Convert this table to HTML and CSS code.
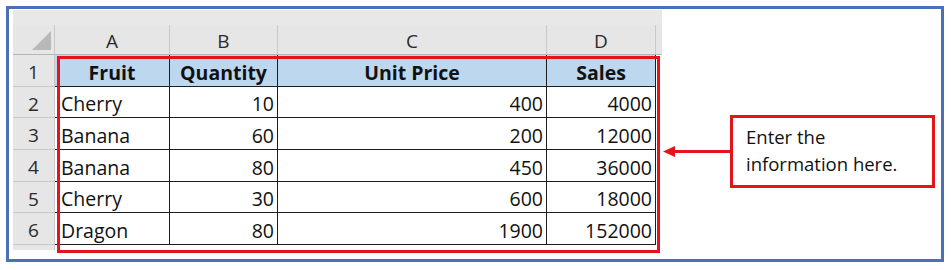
FILE: index.html
```html
<!DOCTYPE html>
<html>
<head>
<meta charset="utf-8">
<link rel="stylesheet" href="styles.css">
</head>
<body>
<div class="frame">
  <div class="sheet">
    <div class="grid">
      <div class="strip"></div>
      <div class="corner"><svg class="tri" width="42" height="30" viewBox="0 0 42 30"><polygon points="19,25 38,25 38,6" fill="#b8b8b8"/></svg></div>
      <div class="colh">A</div>
      <div class="colh">B</div>
      <div class="colh">C</div>
      <div class="colh">D</div>
      <div class="colh end"></div>

      <div class="rowh">1</div>
      <div class="cell th">Fruit</div>
      <div class="cell th">Quantity</div>
      <div class="cell th">Unit Price</div>
      <div class="cell th">Sales</div>
      <div class="blank"></div>

      <div class="rowh">2</div>
      <div class="cell">Cherry</div>
      <div class="cell num">10</div>
      <div class="cell num">400</div>
      <div class="cell num">4000</div>
      <div class="blank"></div>

      <div class="rowh">3</div>
      <div class="cell">Banana</div>
      <div class="cell num">60</div>
      <div class="cell num">200</div>
      <div class="cell num">12000</div>
      <div class="blank"></div>

      <div class="rowh">4</div>
      <div class="cell">Banana</div>
      <div class="cell num">80</div>
      <div class="cell num">450</div>
      <div class="cell num">36000</div>
      <div class="blank"></div>

      <div class="rowh">5</div>
      <div class="cell">Cherry</div>
      <div class="cell num">30</div>
      <div class="cell num">600</div>
      <div class="cell num">18000</div>
      <div class="blank"></div>

      <div class="rowh">6</div>
      <div class="cell">Dragon</div>
      <div class="cell num">80</div>
      <div class="cell num">1900</div>
      <div class="cell num">152000</div>
      <div class="blank"></div>

      <div class="rowh stub"></div>
    </div>
    <div class="highlight"></div>
  </div>
  <svg class="arrow" width="67" height="73" viewBox="0 0 67 73">
    <line x1="10" y1="36.5" x2="67" y2="36.5" stroke="#e3141c" stroke-width="3"/>
    <polygon points="0,36.5 12,31 12,42" fill="#e3141c"/>
  </svg>
  <div class="callout">Enter the<br>information here.</div>
</div>
</body>
</html>
```
FILE: styles.css
```css
html, body {
  margin: 0;
  padding: 0;
  background: #ffffff;
}

body {
  font-family: "Open Sans", "Noto Sans", sans-serif;
  color: #111;
}

.frame {
  margin: 6px;
  width: 938px;
  height: 256px;
  box-sizing: border-box;
  border: 3px solid #4a70b6;
  display: flex;
  align-items: flex-start;
}

.sheet {
  position: relative;
  margin: 1px 0 0 4px;
}

.grid {
  display: grid;
  grid-template-columns: 42px 115px 108px 269px 109px 6px;
  grid-template-rows: 15px 30px 32px 31px 32px 32px 31px 32px 5px;
}

.strip {
  grid-column: 1 / -1;
  background: #e8e8e8;
}

.corner, .colh {
  background: #e6e6e6;
  box-sizing: border-box;
  border-right: 1px solid #c9c9c9;
  border-bottom: 1px solid #b5b5b5;
}

.corner .tri {
  display: block;
}

.colh {
  display: flex;
  align-items: center;
  justify-content: center;
  font-size: 19px;
  color: #2b2b2b;
  padding-top: 2px;
}

.colh.end {
  border-right: none;
}

.rowh {
  grid-column: 1;
  background: #e6e6e6;
  box-sizing: border-box;
  border-right: 1px solid #c9c9c9;
  border-bottom: 1px solid #c9c9c9;
  display: flex;
  align-items: center;
  justify-content: center;
  font-size: 19px;
  color: #2b2b2b;
  padding-top: 3px;
}

.rowh.stub {
  border-bottom: none;
}

.cell {
  box-sizing: border-box;
  border-right: 1px solid #1e1e1e;
  border-bottom: 1px solid #1e1e1e;
  display: flex;
  align-items: center;
  padding: 3px 3px 0 6px;
  font-size: 19.5px;
  white-space: nowrap;
  overflow: hidden;
}

.cell.th {
  background: #bdd7ee;
  font-weight: 700;
  justify-content: center;
  padding-left: 3px;
}

.cell.num {
  justify-content: flex-end;
}

.blank {
  background: #ffffff;
}

.highlight {
  position: absolute;
  left: 44px;
  top: 46px;
  width: 603px;
  height: 197px;
  box-sizing: border-box;
  border: 3px solid #e3141c;
  pointer-events: none;
}

.arrow {
  display: block;
  margin: 106px 0 0 1px;
}

.callout {
  box-sizing: border-box;
  width: 205px;
  height: 73px;
  margin-top: 106px;
  border: 3px solid #e3141c;
  padding: 5px 0 0 13px;
  font-size: 18.5px;
  line-height: 27px;
  color: #111;
  white-space: nowrap;
}
```
